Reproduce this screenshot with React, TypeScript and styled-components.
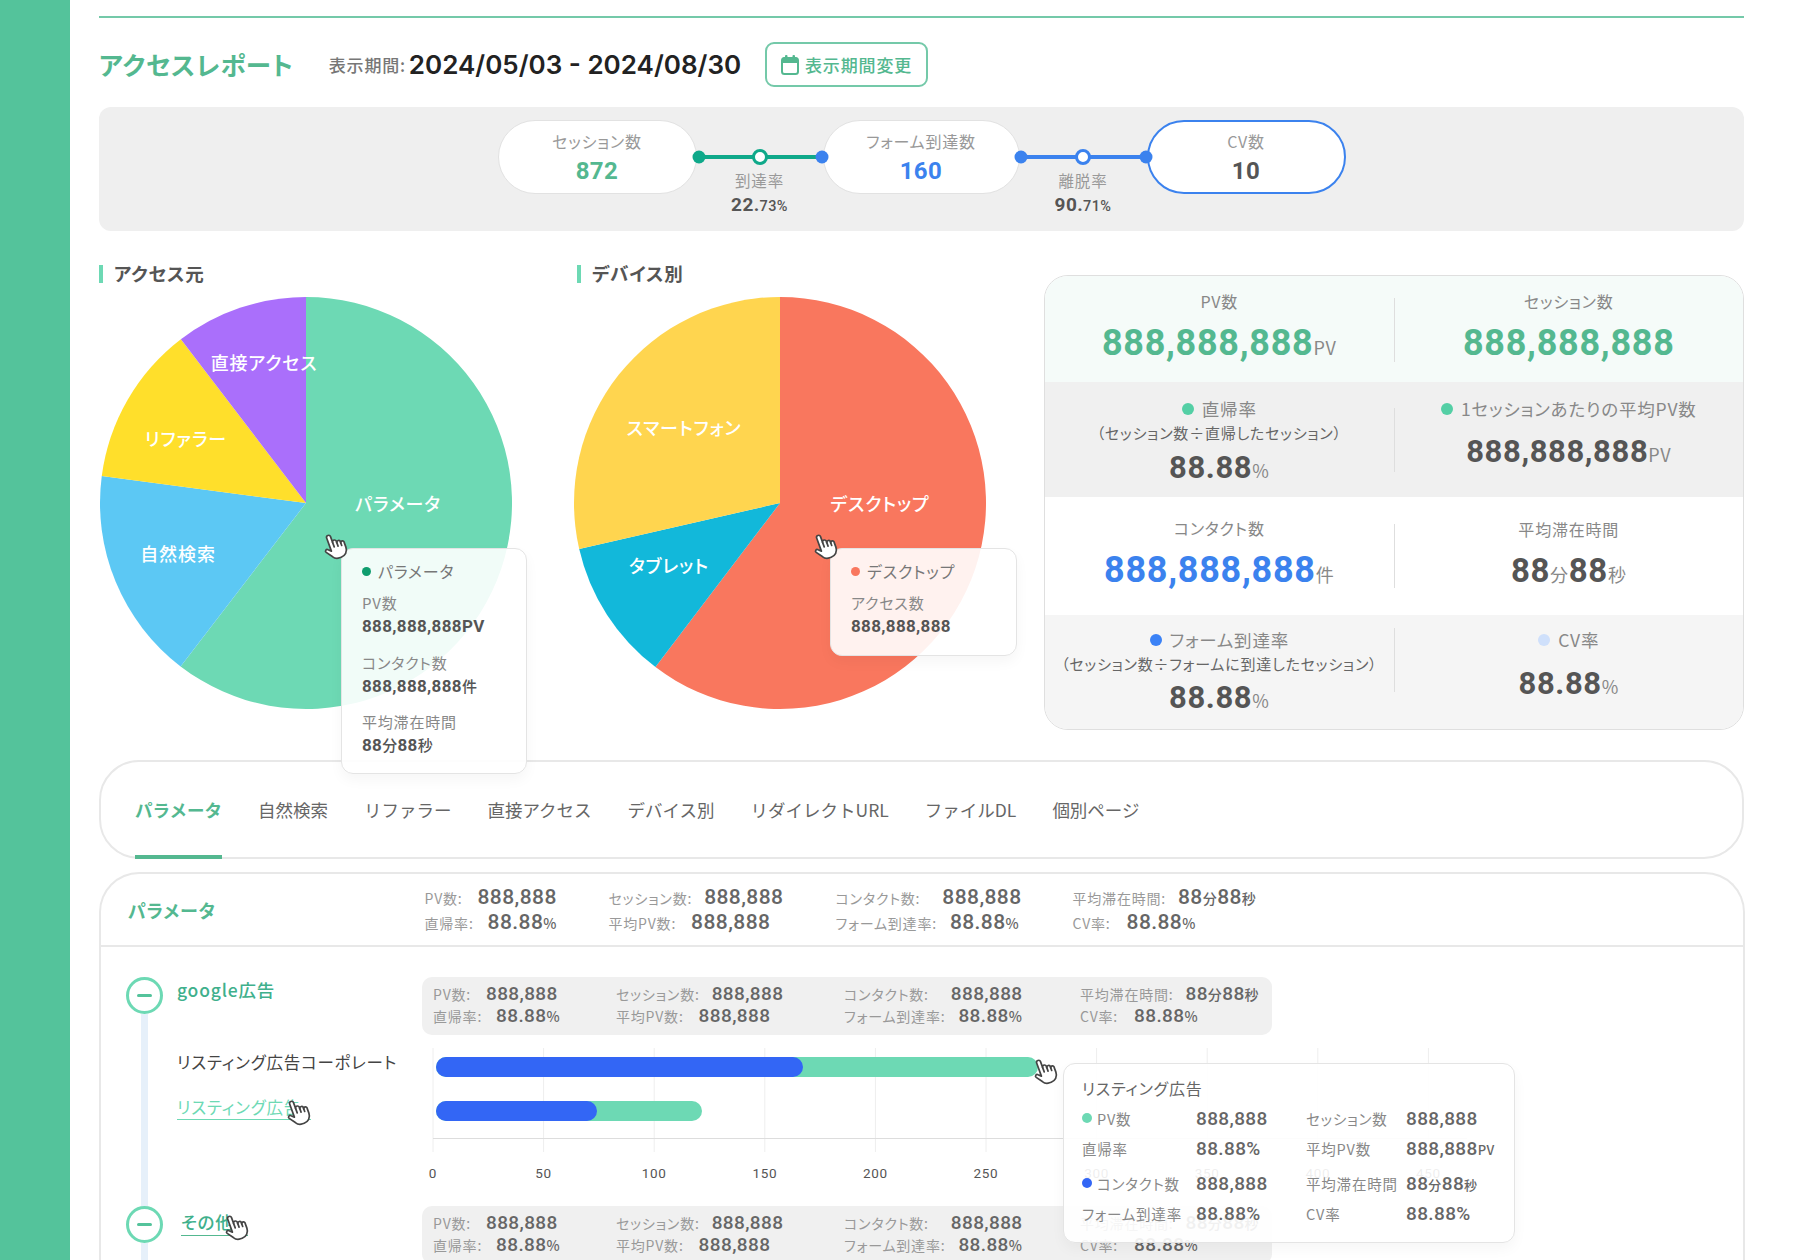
import React from "react";
import styled, { createGlobalStyle } from "styled-components";

const GREEN = "#54b890";
const SOFT = "#6dd9b4";
const BLUE = "#3b82ee";
const BAR = "#3366f5";
const FONT = `"Noto Sans CJK JP", "Noto Sans", sans-serif`;
const NUM = `Roboto, "Noto Sans CJK JP", sans-serif`;

const Global = createGlobalStyle`
  html, body { margin: 0; padding: 0; height: 1260px; overflow: hidden; background: #fff; }
  body { font-family: ${FONT}; font-feature-settings: "palt"; letter-spacing: .05em; color: #555; }
  * { box-sizing: border-box; }
`;

const Page = styled.div`display: flex; height: 1260px; overflow: hidden;`;
const Sidebar = styled.aside`width: 70px; flex: none; background: #54c39b;`;
const Main = styled.main`flex: 1; min-width: 0; padding: 16px 58px 0 29px;`;
const TopRule = styled.div`height: 2px; background: #74c9a9;`;

const Header = styled.header`display: flex; align-items: center; height: 45px; margin-top: 24px;`;
const Title = styled.h1`margin: -2px 35px 0 0; font-size: 25.5px; font-weight: 700; color: ${GREEN}; line-height: 1;`;
const PeriodLabel = styled.span`font-size: 17px; font-weight: 500; color: #777; margin-right: 3px;`;
const PeriodValue = styled.span`font-family: Inter, sans-serif; font-size: 26px; font-weight: 600; color: #222; letter-spacing: 0;`;
const PeriodButton = styled.button`
  margin-left: 24px; width: 163px; height: 45px; display: flex; align-items: center; justify-content: center; gap: 6px;
  background: #fff; border: 2px solid #74c9a9; border-radius: 9px; color: ${GREEN};
  font: 500 17px ${FONT}; font-feature-settings: "palt"; letter-spacing: .05em; padding: 0;
`;

const Funnel = styled.section`
  height: 124px; margin-top: 20px; background: #efefef; border-radius: 12px;
  display: flex; justify-content: center; align-items: flex-start; padding: 13px 0 0 0;
`;
const Pill = styled.div<{ $w: number; $active?: boolean }>`
  width: ${p => p.$w}px; height: 74px; flex: none; border-radius: 37px; background: #fff;
  border: ${p => (p.$active ? `2px solid ${BLUE}` : "1px solid #e2e2e2")};
  display: flex; flex-direction: column; align-items: center; justify-content: center;
`;
const PillLabel = styled.span`font-size: 16px; color: #999; line-height: 22px; margin-top: 2px;`;
const PillValue = styled.span<{ $c: string }>`font-family: ${NUM}; letter-spacing: .02em; font-size: 24px; font-weight: 700; color: ${p => p.$c}; line-height: 32px; margin-top: 3px;`;
const Connector = styled.div<{ $w: number }>`
  width: ${p => p.$w}px; flex: none; display: flex; flex-direction: column; align-items: center; padding-top: 27px;
`;
const ConnLine = styled.svg`display: block; overflow: visible; position: relative;`;
const ConnLabel = styled.span`font-size: 15.5px; color: #999; line-height: 20px; margin-top: 3px;`;
const ConnValue = styled.span`font-family: ${NUM}; letter-spacing: .02em; font-size: 19px; font-weight: 700; color: #555; line-height: 26px; margin-top: 2px;`;
const ConnUnit = styled.small`font-size: 14.5px; font-weight: 500;`;

const Overview = styled.section`display: flex; margin-top: 33px; height: 466px;`;
const PieColumn = styled.div<{ $w: number }>`width: ${p => p.$w}px; flex: none; position: relative;`;
const SectionTitle = styled.h2<{ $indent?: number }>`
  margin: 1px 0 14px ${p => p.$indent || 0}px; height: 18px; border-left: 4px solid ${SOFT}; padding-left: 11px;
  font-size: 18.5px; font-weight: 700; color: #555; line-height: 16px;
`;
const PieSvg = styled.svg<{ $shift: number }>`display: block; overflow: visible; margin-left: ${p => p.$shift}px;`;
const PieLabel = styled.text`fill: #fff; font-size: 18px; font-weight: 500; font-family: ${FONT}; font-feature-settings: "palt"; letter-spacing: .05em;`;

const Tooltip = styled.div<{ $l: number; $t: number; $w: number; $h: number }>`
  position: absolute; left: ${p => p.$l}px; top: ${p => p.$t}px; width: ${p => p.$w}px; height: ${p => p.$h}px; z-index: 6;
  background: rgba(255,255,255,.9); border: 1px solid #e4e4e4; border-radius: 12px;
  box-shadow: 0 6px 14px rgba(0,0,0,.04);
`;
const PieTip = styled(Tooltip)`padding: 11px 20px;`;
const TipHead = styled.div`display: flex; align-items: center; gap: 7px; font-size: 16px; color: #777; line-height: 22px;`;
const Dot = styled.i<{ $c: string; $s?: number }>`
  display: inline-block; flex: none; width: ${p => p.$s || 9}px; height: ${p => p.$s || 9}px; border-radius: 50%; background: ${p => p.$c};
`;
const TipLabel = styled.div`font-size: 15px; color: #888; line-height: 22px; margin-top: 10px;`;
const TipValue = styled.div`font-family: ${NUM}; letter-spacing: .02em; font-size: 17px; font-weight: 700; color: #555; line-height: 24px;`;
const TipBlock = styled.div<{ $gap?: number }>`padding-top: ${p => p.$gap || 0}px;`;
const TipUnit = styled.small`font-family: ${FONT}; font-size: 15px; font-weight: 500;`;

const Hand = styled.svg<{ $l: number; $t: number }>`
  position: absolute; left: ${p => p.$l}px; top: ${p => p.$t}px; width: 29px; height: 29px;
  transform: rotate(-20deg); z-index: 8; overflow: visible;
`;
const Cursor = ({ l, t }: { l: number; t: number }) => (
  <Hand $l={l} $t={t} viewBox="0 0 24 24" fill="#fff" stroke="#444" strokeWidth="1.4" strokeLinejoin="round" strokeLinecap="round">
    <path d="M8 4a1.7 1.7 0 0 1 3.4 0v5a1.6 1.6 0 0 1 3.2.5V10.5a1.5 1.5 0 0 1 3 .4v.8a1.4 1.4 0 0 1 2.8.8v4c0 4-3 6.5-6.5 6.5h-1.5c-2.5 0-4-1-5.2-3L3.6 15c-.9-1.5 1-2.8 2.2-1.5L8 15.5Z" />
    <path d="M11.4 9v4M14.6 10v3.5M17.6 11.5v2.5" fill="none" />
  </Hand>
);

const MetricsCard = styled.section`
  width: 700px; height: 455px; margin-top: 11px; flex: none; border: 1px solid #dfdfdf; border-radius: 24px; overflow: hidden;
`;
const MetricRow = styled.div<{ $h: number; $bg: string }>`
  height: ${p => p.$h}px; background: ${p => p.$bg}; display: grid; grid-template-columns: 1fr 1px 1fr; align-items: stretch;
`;
const Rule = styled.div<{ $top: number }>`width: 1px; height: 64px; margin-top: ${p => p.$top}px; background: #dedede;`;
const MetricCell = styled.div<{ $top: number }>`
  display: flex; flex-direction: column; align-items: center; padding-top: ${p => p.$top}px; min-width: 0;
`;
const MetricLabel = styled.div<{ $dotted?: boolean }>`
  display: flex; align-items: center; gap: 8px; font-size: ${p => (p.$dotted ? 17.5 : 16)}px; color: #888; line-height: 24px;
`;
const MetricSub = styled.div`font-size: 15px; color: #666; line-height: 20px; margin-top: 2px; white-space: nowrap;`;
const MetricValue = styled.div<{ $c?: string; $s: number; $gap: number }>`
  font-family: ${NUM}; letter-spacing: .02em;
  font-size: ${p => p.$s}px; font-weight: 700; color: ${p => p.$c || "#555"}; line-height: 40px; margin-top: ${p => p.$gap}px;
`;
const MetricUnit = styled.small`font-family: ${FONT}; font-size: 18px; font-weight: 400; color: #888;`;

const Tabs = styled.nav`
  margin-top: 30px; height: 99px; border: 2px solid #e8e8e8; border-radius: 40px; display: flex; gap: 36px; padding-left: 34px; background: #fff;
`;
const Tab = styled.div<{ $active?: boolean }>`
  display: flex; align-items: center; height: 97px; font-size: 17.5px; line-height: 1; font-feature-settings: normal; letter-spacing: 0;
  color: ${p => (p.$active ? GREEN : "#666")}; font-weight: ${p => (p.$active ? 700 : 400)};
  border-bottom: 4px solid ${p => (p.$active ? GREEN : "transparent")}; padding-top: 2px;
`;

const Detail = styled.section`
  margin: 13px -1px 0 0; border: 2px solid #e8e8e8; border-bottom: none; border-radius: 40px 40px 0 0; height: 600px; background: #fff;
`;
const DetailHead = styled.div`height: 73px; border-bottom: 2px solid #e8e8e8; display: flex; align-items: center; padding-left: 27px;`;
const DetailTitle = styled.h3`margin: 0; width: 296.5px; flex: none; font-size: 18px; font-weight: 700; color: ${GREEN};`;

const StatGrid = styled.div<{ $cols: string; $h: number }>`
  display: grid; grid-template-columns: ${p => p.$cols}; grid-auto-rows: ${p => p.$h}px; align-items: center;
`;
const StatCell = styled.div`display: flex; align-items: baseline; white-space: nowrap;`;
const StatLabel = styled.span<{ $gap: number }>`font-size: 14px; color: #999; margin-right: ${p => p.$gap}px;`;
const StatValue = styled.span<{ $s: number }>`font-family: ${NUM}; letter-spacing: .02em; font-size: ${p => p.$s}px; font-weight: 500; color: #666;`;
const StatUnit = styled.small`font-family: ${FONT}; font-size: 14px; font-weight: 500;`;

const Body = styled.div`padding: 30px 0 0 25px;`;
const Group = styled.div<{ $h?: number }>`
  display: grid; grid-template-columns: 37px 259px 1fr; ${p => (p.$h ? `height: ${p.$h}px;` : "height: 300px;")}
`;
const Timeline = styled.div`display: flex; flex-direction: column; align-items: center;`;
const Toggle = styled.div`
  width: 37px; height: 37px; flex: none; border: 3px solid ${SOFT}; border-radius: 50%; display: flex; align-items: center; justify-content: center;
`;
const Minus = styled.i`display: block; width: 15px; height: 3px; background: #54c39b; border-radius: 2px;`;
const Track = styled.div`flex: 1; width: 7px; background: #e6f0fa;`;
const NameCol = styled.div`padding-left: 14px; display: flex; flex-direction: column; align-items: flex-start;`;
const GroupName = styled.div<{ $link?: boolean }>`
  font-size: 17.5px; font-weight: 500; color: #3fb08c; line-height: 26px;
  ${p => p.$link ? `margin: 3px 0 0 4px; border-bottom: 1px solid ${GREEN}; padding-right: 14px;` : ""}
`;
const ItemName = styled.div`font-size: 16.5px; line-height: 24px; color: #444; margin-top: 47px;`;
const ItemLink = styled.div`
  font-size: 16.5px; line-height: 23px; color: ${SOFT}; margin-top: 22px; border-bottom: 1px solid ${SOFT}; padding-right: 10px;
`;
const ChartCol = styled.div`position: relative; min-width: 0;`;
const Summary = styled.div`
  width: 850px; height: 58px; background: #f0f0f0; border-radius: 10px; padding: 5px 0 0 11px;
`;
const ChartSvg = styled.svg`display: block; margin-top: 13px; overflow: visible;`;
const ChartTick = styled.text`font-size: 13.5px; font-family: ${NUM}; fill: #555; text-anchor: middle; letter-spacing: .05em;`;

const BarTip = styled(Tooltip)`padding: 12px 0 0 18px;`;
const BarTipTitle = styled.div`font-size: 16px; color: #666; line-height: 24px; margin-bottom: 3px;`;
const BarTipRow = styled.div<{ $gap?: number }>`
  display: grid; grid-template-columns: 114px 110px 100px auto; align-items: center; height: 30px; margin-top: ${p => p.$gap || 0}px;
`;
const BarTipLabel = styled.span`display: flex; align-items: center; gap: 5px; font-size: 14.5px; color: #888; white-space: nowrap;`;
const BarTipValue = styled.span`font-family: ${NUM}; letter-spacing: .02em; font-size: 19px; font-weight: 500; color: #666; white-space: nowrap;`;
const BarTipUnit = styled.small`font-family: ${FONT}; font-size: 13px;`;

const polar = (cx: number, cy: number, r: number, deg: number) => {
  const a = ((deg - 90) * Math.PI) / 180;
  return [cx + r * Math.cos(a), cy + r * Math.sin(a)];
};
const slice = (from: number, to: number) => {
  const [x1, y1] = polar(206, 206, 206, from);
  const [x2, y2] = polar(206, 206, 206, to);
  return `M206 206L${x1} ${y1}A206 206 0 ${to - from > 180 ? 1 : 0} 1 ${x2} ${y2}Z`;
};

type Seg = { c: string; a: number; b: number };
type Lab = { t: string; x: number; y: number };
const Pie = ({ segs, labels, shift }: { segs: Seg[]; labels: Lab[]; shift: number }) => (
  <PieSvg $shift={shift} width="412" height="412" viewBox="0 0 412 412">
    {segs.map(s => <path key={s.c} d={slice(s.a, s.b)} fill={s.c} />)}
    {labels.map(l => <PieLabel key={l.t} x={l.x} y={l.y} textAnchor="middle" dominantBaseline="central">{l.t}</PieLabel>)}
  </PieSvg>
);

type Stat = { l: string; v: string; u?: React.ReactNode; g: number };
const headerStats: Stat[] = [
  { l: "PV数:", v: "888,888", g: 15 }, { l: "セッション数:", v: "888,888", g: 12 }, { l: "コンタクト数:", v: "888,888", g: 22 },
  { l: "平均滞在時間:", v: "88", u: <><StatUnit>分</StatUnit>88<StatUnit>秒</StatUnit></>, g: 12 },
  { l: "直帰率:", v: "88.88", u: <StatUnit>%</StatUnit>, g: 14 }, { l: "平均PV数:", v: "888,888", g: 15 }, { l: "フォーム到達率:", v: "88.88", u: <StatUnit>%</StatUnit>, g: 13 },
  { l: "CV率:", v: "88.88", u: <StatUnit>%</StatUnit>, g: 16 },
];
const StatBlock = ({ cols, h, s }: { cols: string; h: number; s: number }) => (
  <StatGrid $cols={cols} $h={h}>
    {headerStats.map(x => (
      <StatCell key={x.l}>
        <StatLabel $gap={x.g}>{x.l}</StatLabel>
        <StatValue $s={s}>{x.v}{x.u}</StatValue>
      </StatCell>
    ))}
  </StatGrid>
);

const ticks = [0, 50, 100, 150, 200, 250, 300, 350, 400, 450];

export default function App() {
  return (
    <Page>
      <Global />
      <Sidebar />
      <Main>
        <TopRule />
        <Header>
          <Title>アクセスレポート</Title>
          <PeriodLabel>表示期間:</PeriodLabel>
          <PeriodValue>2024/05/03 - 2024/08/30</PeriodValue>
          <PeriodButton>
            <svg width="18" height="20" viewBox="0 0 18 20">
              <rect x="1" y="3" width="16" height="16" rx="2.5" fill="none" stroke={GREEN} strokeWidth="2" />
              <path d="M1 4.5a2 2 0 0 1 2-2h12a2 2 0 0 1 2 2V8H1Z" fill={GREEN} />
              <rect x="4" y="0" width="2.5" height="4" rx="1" fill={GREEN} />
              <rect x="11.5" y="0" width="2.5" height="4" rx="1" fill={GREEN} />
            </svg>
            表示期間変更
          </PeriodButton>
        </Header>

        <Funnel>
          <Pill $w={199}>
            <PillLabel>セッション数</PillLabel>
            <PillValue $c={GREEN}>872</PillValue>
          </Pill>
          <Connector $w={126}>
            <ConnLine width="126" height="20" viewBox="0 0 126 20">
              <line x1="2" y1="10" x2="124" y2="10" stroke="#0fa98a" strokeWidth="4" />
              <circle cx="2" cy="10" r="6.5" fill="#0fa98a" />
              <circle cx="63" cy="10" r="6.5" fill="#fff" stroke="#0fa98a" strokeWidth="3" />
              <circle cx="125" cy="10" r="6.5" fill={BLUE} />
            </ConnLine>
            <ConnLabel>到達率</ConnLabel>
            <ConnValue>22.<ConnUnit>73%</ConnUnit></ConnValue>
          </Connector>
          <Pill $w={197}>
            <PillLabel>フォーム到達数</PillLabel>
            <PillValue $c={BLUE}>160</PillValue>
          </Pill>
          <Connector $w={127}>
            <ConnLine width="127" height="20" viewBox="0 0 127 20">
              <line x1="2" y1="10" x2="125" y2="10" stroke={BLUE} strokeWidth="4" />
              <circle cx="1" cy="10" r="6.5" fill={BLUE} />
              <circle cx="63" cy="10" r="6.5" fill="#fff" stroke={BLUE} strokeWidth="3" />
              <circle cx="126" cy="10" r="6.5" fill={BLUE} />
            </ConnLine>
            <ConnLabel>離脱率</ConnLabel>
            <ConnValue>90.<ConnUnit>71%</ConnUnit></ConnValue>
          </Connector>
          <Pill $w={199} $active>
            <PillLabel>CV数</PillLabel>
            <PillValue $c="#555">10</PillValue>
          </Pill>
        </Funnel>

        <Overview>
          <PieColumn $w={475}>
            <SectionTitle>アクセス元</SectionTitle>
            <Pie
              shift={1}
              segs={[
                { c: SOFT, a: 0, b: 217.5 },
                { c: "#5cc8f4", a: 217.5, b: 277.5 },
                { c: "#ffdf2b", a: 277.5, b: 322.6 },
                { c: "#aa6ffb", a: 322.6, b: 360 },
              ]}
              labels={[
                { t: "パラメータ", x: 298, y: 206 },
                { t: "直接アクセス", x: 164, y: 65 },
                { t: "リファラー", x: 86, y: 141 },
                { t: "自然検索", x: 78, y: 256 },
              ]}
            />
            <Cursor l={221} t={267} />
            <PieTip $l={242} $t={284} $w={186} $h={226}>
              <TipHead><Dot $c="#0f9d6e" />パラメータ</TipHead>
              <TipLabel>PV数</TipLabel>
              <TipValue>888,888,888PV</TipValue>
              <TipBlock $gap={4}>
                <TipLabel>コンタクト数</TipLabel>
                <TipValue>888,888,888<TipUnit>件</TipUnit></TipValue>
              </TipBlock>
              <TipBlock $gap={3}>
                <TipLabel>平均滞在時間</TipLabel>
                <TipValue>88<TipUnit>分</TipUnit>88<TipUnit>秒</TipUnit></TipValue>
              </TipBlock>
            </PieTip>
          </PieColumn>
          <PieColumn $w={470}>
            <SectionTitle $indent={3}>デバイス別</SectionTitle>
            <Pie
              shift={0}
              segs={[
                { c: "#f9775e", a: 0, b: 217.2 },
                { c: "#12b8da", a: 217.2, b: 257.1 },
                { c: "#ffd54f", a: 257.1, b: 360 },
              ]}
              labels={[
                { t: "デスクトップ", x: 306, y: 206 },
                { t: "スマートフォン", x: 110, y: 130 },
                { t: "タブレット", x: 95, y: 268 },
              ]}
            />
            <Cursor l={236} t={267} />
            <PieTip $l={256} $t={284} $w={187} $h={108}>
              <TipHead><Dot $c="#f9775e" />デスクトップ</TipHead>
              <TipLabel>アクセス数</TipLabel>
              <TipValue>888,888,888</TipValue>
            </PieTip>
          </PieColumn>
          <MetricsCard>
            <MetricRow $h={106} $bg="#f5fbf9">
              <MetricCell $top={13}>
                <MetricLabel>PV数</MetricLabel>
                <MetricValue $c={GREEN} $s={36} $gap={10}>888,888,888<MetricUnit>PV</MetricUnit></MetricValue>
              </MetricCell>
              <Rule $top={22} />
              <MetricCell $top={13}>
                <MetricLabel>セッション数</MetricLabel>
                <MetricValue $c={GREEN} $s={36} $gap={10}>888,888,888</MetricValue>
              </MetricCell>
            </MetricRow>
            <MetricRow $h={115} $bg="#f0f0f0">
              <MetricCell $top={15}>
                <MetricLabel $dotted><Dot $c="#54cfa5" $s={12} />直帰率</MetricLabel>
                <MetricSub>（セッション数÷直帰したセッション）</MetricSub>
                <MetricValue $s={31} $gap={5}>88.88<MetricUnit>%</MetricUnit></MetricValue>
              </MetricCell>
              <Rule $top={26} />
              <MetricCell $top={15}>
                <MetricLabel $dotted><Dot $c="#54cfa5" $s={12} />1セッションあたりの平均PV数</MetricLabel>
                <MetricValue $s={31} $gap={11}>888,888,888<MetricUnit>PV</MetricUnit></MetricValue>
              </MetricCell>
            </MetricRow>
            <MetricRow $h={118} $bg="#fff">
              <MetricCell $top={19}>
                <MetricLabel>コンタクト数</MetricLabel>
                <MetricValue $c={BLUE} $s={36} $gap={10}>888,888,888<MetricUnit>件</MetricUnit></MetricValue>
              </MetricCell>
              <Rule $top={27} />
              <MetricCell $top={20}>
                <MetricLabel>平均滞在時間</MetricLabel>
                <MetricValue $s={33} $gap={10}>88<MetricUnit>分</MetricUnit>88<MetricUnit>秒</MetricUnit></MetricValue>
              </MetricCell>
            </MetricRow>
            <MetricRow $h={115} $bg="#f5f5f5">
              <MetricCell $top={13}>
                <MetricLabel $dotted><Dot $c="#3b82f6" $s={12} />フォーム到達率</MetricLabel>
                <MetricSub>（セッション数÷フォームに到達したセッション）</MetricSub>
                <MetricValue $s={31} $gap={4}>88.88<MetricUnit>%</MetricUnit></MetricValue>
              </MetricCell>
              <Rule $top={13} />
              <MetricCell $top={13}>
                <MetricLabel $dotted><Dot $c="#cfe0fb" $s={12} />CV率</MetricLabel>
                <MetricValue $s={31} $gap={12}>88.88<MetricUnit>%</MetricUnit></MetricValue>
              </MetricCell>
            </MetricRow>
          </MetricsCard>
        </Overview>

        <Tabs>
          <Tab $active>パラメータ</Tab>
          <Tab>自然検索</Tab>
          <Tab>リファラー</Tab>
          <Tab>直接アクセス</Tab>
          <Tab>デバイス別</Tab>
          <Tab>リダイレクトURL</Tab>
          <Tab>ファイルDL</Tab>
          <Tab>個別ページ</Tab>
        </Tabs>

        <Detail>
          <DetailHead>
            <DetailTitle>パラメータ</DetailTitle>
            <StatBlock cols="184px 227px 237px auto" h={25} s={21} />
          </DetailHead>
          <Body>
            <Group $h={229}>
              <Timeline><Toggle><Minus /></Toggle><Track /></Timeline>
              <NameCol>
                <GroupName>google広告</GroupName>
                <ItemName>リスティング広告コーポレート</ItemName>
                <ItemLink>リスティング広告</ItemLink>
                <Cursor l={283} t={1097} />
              </NameCol>
              <ChartCol>
                <Summary><StatBlock cols="183px 228px 236px auto" h={22} s={19} /></Summary>
                <ChartSvg width="1100" height="158" viewBox="0 0 1100 158">
                  {ticks.map((t, i) => (
                    <line key={t} x1={11 + i * 110.6} y1="0" x2={11 + i * 110.6} y2="104" stroke="#eeeeee" />
                  ))}
                  <line x1="11" y1="90.5" x2="1045" y2="90.5" stroke="#dddddd" />
                  <rect x="14" y="9" width="602" height="20" rx="10" fill={SOFT} />
                  <rect x="14" y="9" width="367" height="20" rx="10" fill={BAR} />
                  <rect x="14" y="53" width="266" height="20" rx="10" fill={SOFT} />
                  <rect x="14" y="53" width="161" height="20" rx="10" fill={BAR} />
                  {ticks.map((t, i) => (
                    <ChartTick key={t} x={11 + i * 110.6} y="130">{t}</ChartTick>
                  ))}
                </ChartSvg>
                <Cursor l={608} t={79} />
                <BarTip $l={641} $t={86} $w={452} $h={180}>
                  <BarTipTitle>リスティング広告</BarTipTitle>
                  <BarTipRow>
                    <BarTipLabel><Dot $c={SOFT} $s={10} />PV数</BarTipLabel><BarTipValue>888,888</BarTipValue>
                    <BarTipLabel>セッション数</BarTipLabel><BarTipValue>888,888</BarTipValue>
                  </BarTipRow>
                  <BarTipRow>
                    <BarTipLabel>直帰率</BarTipLabel><BarTipValue>88.88%</BarTipValue>
                    <BarTipLabel>平均PV数</BarTipLabel><BarTipValue>888,888<BarTipUnit>PV</BarTipUnit></BarTipValue>
                  </BarTipRow>
                  <BarTipRow $gap={5}>
                    <BarTipLabel><Dot $c={BAR} $s={10} />コンタクト数</BarTipLabel><BarTipValue>888,888</BarTipValue>
                    <BarTipLabel>平均滞在時間</BarTipLabel><BarTipValue>88<BarTipUnit>分</BarTipUnit>88<BarTipUnit>秒</BarTipUnit></BarTipValue>
                  </BarTipRow>
                  <BarTipRow>
                    <BarTipLabel>フォーム到達率</BarTipLabel><BarTipValue>88.88%</BarTipValue>
                    <BarTipLabel>CV率</BarTipLabel><BarTipValue>88.88%</BarTipValue>
                  </BarTipRow>
                </BarTip>
              </ChartCol>
            </Group>
            <Group>
              <Timeline><Toggle><Minus /></Toggle><Track /></Timeline>
              <NameCol>
                <GroupName $link>その他</GroupName>
                <Cursor l={221} t={1212} />
              </NameCol>
              <ChartCol>
                <Summary><StatBlock cols="183px 228px 236px auto" h={22} s={19} /></Summary>
              </ChartCol>
            </Group>
          </Body>
        </Detail>
      </Main>
    </Page>
  );
}
